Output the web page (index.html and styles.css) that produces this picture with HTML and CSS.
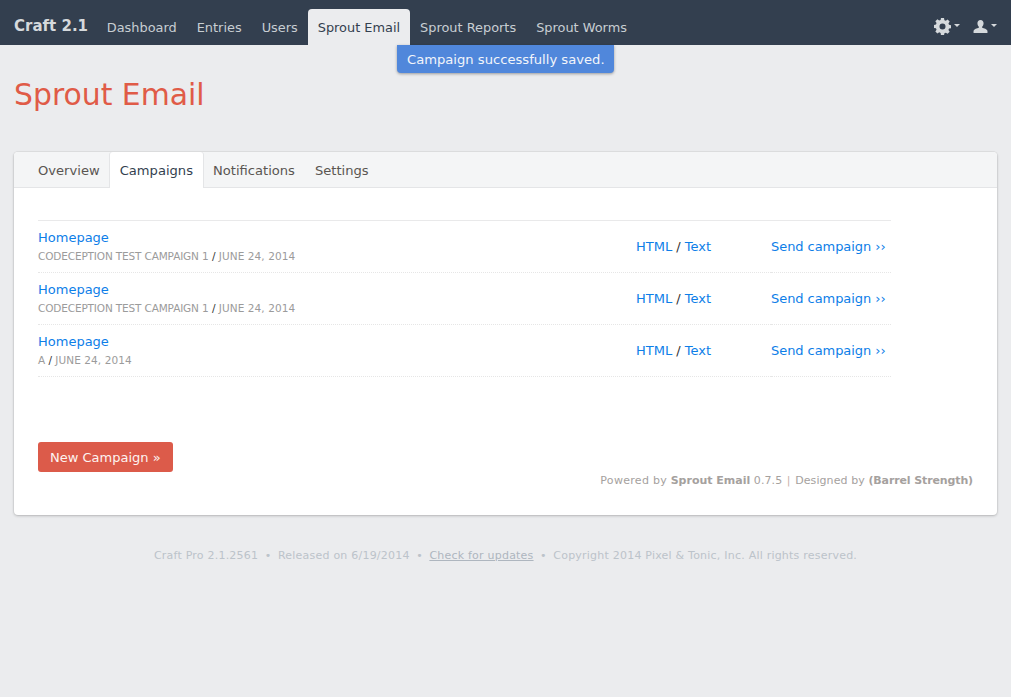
FILE: index.html
```html
<!DOCTYPE html>
<html lang="en">
<head>
  <meta charset="UTF-8">
  <title>Sprout Email - Craft</title>
  <link rel="stylesheet" href="styles.css">
</head>
<body>
  <header class="navbar">
    <a class="brand" href="#">Craft 2.1</a>
    <nav class="nav">
      <a href="#">Dashboard</a>
      <a href="#">Entries</a>
      <a href="#">Users</a>
      <a class="active" href="#">Sprout Email</a>
      <a href="#">Sprout Reports</a>
      <a href="#">Sprout Worms</a>
    </nav>
    <div class="nav-icons">
      <a class="icon-link" href="#">
        <svg width="17" height="17" viewBox="0 0 18 18"><path fill-rule="evenodd" d="M7.4 0h3.200l.4 2.300 1.500.6 1.900-1.300 2.200 2.200-1.300 1.900.6 1.500 2.100.4v3.200l-2.100.4-.6 1.500 1.300 1.900-2.200 2.200-1.900-1.300-1.500.6-.4 2.300H7.400L7 15.800l-1.500-.6-1.900 1.300-2.200-2.200 1.300-1.900-.6-1.500-2.100-.4V7.300l2.100-.4.6-1.500-1.300-1.900 2.200-2.200 1.900 1.300 1.500-.6zM9 5.800a3.200 3.200 0 1 0 0 6.400 3.200 3.200 0 0 0 0-6.400z"/></svg>
        <span class="caret"></span>
      </a>
      <a class="icon-link" href="#">
        <svg width="15" height="13" viewBox="0 0 15 14"><path d="M7.500 0C9.600 0 10.800 1.500 10.800 3.600c0 1.500-.6 2.900-1.500 3.700v1.100c1.900.6 5.200 1.500 5.700 3.100V14H0v-2.500c.5-1.600 3.800-2.500 5.700-3.100V7.300C4.800 6.500 4.200 5.100 4.200 3.600 4.200 1.500 5.400 0 7.500 0z"/></svg>
        <span class="caret"></span>
      </a>
    </div>
  </header>
  <div class="notice">Campaign successfully saved.</div>

  <main class="page">
    <h1>Sprout Email</h1>
    <section class="pane">
      <div class="tabs">
        <a href="#">Overview</a>
        <a class="active" href="#">Campaigns</a>
        <a href="#">Notifications</a>
        <a href="#">Settings</a>
      </div>
      <div class="pane-body">
        <table class="campaigns">
          <tbody>
            <tr>
              <td class="c-name">
                <a href="#">Homepage</a>
                <div class="meta"><span class="meta-list">CODECEPTION TEST CAMPAIGN 1</span> <b>/</b> <span class="meta-date">JUNE 24, 2014</span></div>
              </td>
              <td class="c-view"><a href="#">HTML</a> / <a href="#">Text</a></td>
              <td class="c-send"><a href="#">Send campaign ››</a></td>
            </tr>
            <tr>
              <td class="c-name">
                <a href="#">Homepage</a>
                <div class="meta"><span class="meta-list">CODECEPTION TEST CAMPAIGN 1</span> <b>/</b> <span class="meta-date">JUNE 24, 2014</span></div>
              </td>
              <td class="c-view"><a href="#">HTML</a> / <a href="#">Text</a></td>
              <td class="c-send"><a href="#">Send campaign ››</a></td>
            </tr>
            <tr>
              <td class="c-name">
                <a href="#">Homepage</a>
                <div class="meta"><span class="meta-list">A</span> <b>/</b> <span class="meta-date">JUNE 24, 2014</span></div>
              </td>
              <td class="c-view"><a href="#">HTML</a> / <a href="#">Text</a></td>
              <td class="c-send"><a href="#">Send campaign ››</a></td>
            </tr>
          </tbody>
        </table>
        <div class="pane-foot">
          <a class="btn" href="#">New Campaign »</a>
          <p class="powered"><span class="wide">Powered by</span> <b>Sprout Email</b> 0.7.5 <span class="sep">|</span> Designed by <b class="tight">(Barrel Strength)</b></p>
        </div>
      </div>
    </section>
    <footer class="site-foot">
      Craft Pro 2.1.2561<span class="dot">•</span>Released on 6/19/2014<span class="dot">•</span><a href="#">Check for updates</a><span class="dot">•</span>Copyright 2014 Pixel &amp; Tonic, Inc. All rights reserved.
    </footer>
  </main>
</body>
</html>
```

FILE: styles.css
```css
body {
  font-family: "DejaVu Sans", sans-serif;
  font-size: 13px;
  margin: 0;
  padding: 0;
  background-color: #ebecee;
  color: #333;
}

a {
  text-decoration: none;
}

.navbar {
  display: flex;
  height: 45px;
  padding: 0 14px;
  background-color: #333f4f;
  box-sizing: border-box;
}

.brand {
  font-size: 15px;
  font-weight: bold;
  line-height: 52px;
  height: 45px;
  color: #d5d9dc;
  margin-right: 8.75px;
}

.nav {
  display: flex;
  align-items: flex-end;
  flex: 1;
}

.nav a {
  padding: 0 10px;
  height: 36px;
  line-height: 37px;
  font-size: 12.9px;
  color: #c8ced3;
  border-radius: 4px 4px 0 0;
}

.nav a.active {
  background-color: #ebecee;
  color: #333f4f;
}

.nav-icons {
  display: flex;
  align-items: center;
  gap: 13px;
  padding-top: 7px;
}

.icon-link {
  display: flex;
  align-items: center;
  gap: 3px;
  color: #d5d9dc;
}

.icon-link svg {
  fill: #d5d9dc;
  display: block;
}

.caret {
  width: 0;
  height: 0;
  margin-top: -1px;
  border-left: 3px solid transparent;
  border-right: 3px solid transparent;
  border-top: 3px solid #d5d9dc;
}

.notice {
  position: absolute;
  top: 45px;
  left: 397px;
  width: 217px;
  height: 28px;
  box-sizing: border-box;
  padding: 1px 0 0 10px;
  font-size: 13.13px;
  line-height: 28px;
  color: #f2f5fa;
  background-color: #5087db;
  border-radius: 0 0 4px 4px;
  box-shadow: 0 1px 3px rgba(0, 0, 0, 0.35);
}

.page {
  padding: 0 14px;
}

h1 {
  font-size: 29.85px;
  font-weight: normal;
  line-height: 36px;
  margin: 32px 0 39px;
  color: #e05b47;
}

.pane {
  background-color: #fff;
  border-radius: 4px;
  box-shadow: 0 0 0 1px rgba(0, 0, 0, 0.04), 0 1px 3px rgba(0, 0, 0, 0.2);
}

.tabs {
  display: flex;
  height: 36px;
  padding-left: 14px;
  background-color: #f4f5f6;
  border-bottom: 1px solid #e4e5e7;
  border-radius: 4px 4px 0 0;
  box-sizing: border-box;
}

.tabs a {
  padding: 0 10px;
  font-size: 13.1px;
  line-height: 37px;
  color: #5a5552;
}

.tabs a.active {
  height: 36px;
  background-color: #fff;
  color: #333f4f;
  border-radius: 3px 3px 0 0;
  box-shadow: 1px 0 0 #e4e5e7, -1px 0 0 #e4e5e7;
}

.pane-body {
  padding: 32px 24px 0;
  height: 327px;
  box-sizing: border-box;
}

.campaigns {
  width: 853px;
  border-collapse: collapse;
  border-top: 1px solid #e9e9ea;
}

.campaigns td {
  height: 51px;
  padding: 0;
  border-bottom: 1px dotted #e6e6e6;
}

.campaigns td.c-name {
  height: 49px;
  padding-bottom: 2px;
}

.campaigns a {
  color: #0d7ee8;
}

.c-name a {
  display: block;
  margin-bottom: 5px;
}

.c-send {
  letter-spacing: -0.06px;
}

.meta {
  font-size: 10.5px;
  color: #9b9b9b;
}

.meta-list {
  letter-spacing: -0.15px;
}

.meta-date {
  letter-spacing: 0.08px;
}

.meta b {
  font-weight: normal;
  color: #333;
}

.c-name {
  width: 598px;
}

.c-view {
  width: 135px;
}

.pane-foot {
  display: flex;
  justify-content: space-between;
  align-items: flex-end;
  margin-top: 65px;
}

.btn {
  display: block;
  height: 30px;
  padding: 0 12px;
  line-height: 31px;
  color: #fdf3f1;
  background-color: #dc5b4a;
  border-radius: 3px;
}

.powered {
  margin: 0 0 -15px;
  font-size: 11px;
  letter-spacing: 0.08px;
  color: #a5a19e;
}

.powered b {
  letter-spacing: 0;
}

.powered .wide {
  letter-spacing: 0.3px;
}

.powered .tight {
  letter-spacing: -0.12px;
}

.powered .sep {
  margin: 0 1px;
  color: #c9b0a8;
}

.site-foot {
  margin-top: 34px;
  text-align: center;
  font-size: 11px;
  letter-spacing: 0.22px;
  color: #bcc3ca;
}

.site-foot a {
  color: #aeb6bf;
  text-decoration: underline;
}

.dot {
  margin: 0 6.5px;
}
```
